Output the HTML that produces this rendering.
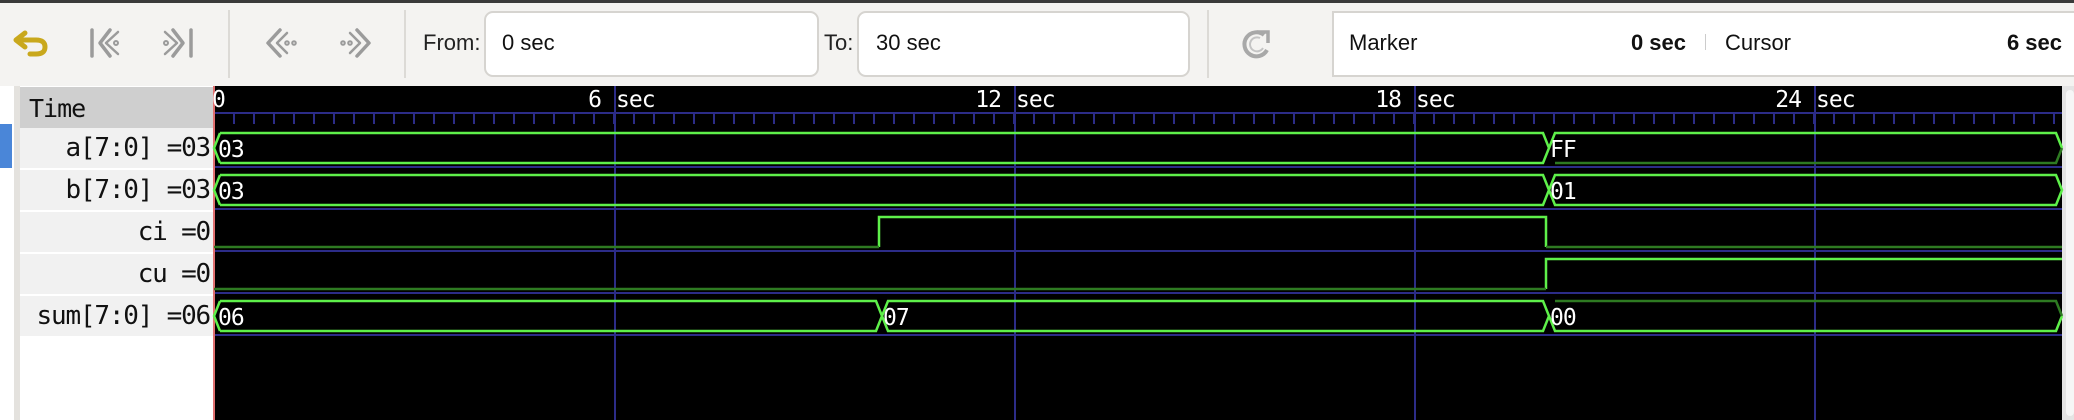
<!DOCTYPE html>
<html><head><meta charset="utf-8">
<style>
*{margin:0;padding:0;box-sizing:border-box}
body{width:2074px;height:420px;overflow:hidden;background:#f4f3f1;font-family:"Liberation Sans",sans-serif;position:relative}
.abs{position:absolute}
.box{position:absolute;background:#fff;border:2px solid #d6d4d0;border-radius:9px}
.lbl{position:absolute;font-size:22px;color:#222;top:30px}
.mono{font-family:"DejaVu Sans Mono","Liberation Mono",monospace}
.row{position:absolute;left:20px;width:193px;height:40px;background:#f1f1f1;text-align:right;padding-right:3px;font-size:26px;line-height:40px;color:#111;letter-spacing:-1.2px}
</style></head><body>
<div class="abs" style="left:0;top:0;width:2074px;height:3px;background:#3a3a3a"></div>
<svg class="abs" style="left:0;top:0" width="420" height="86">
 <path d="M25 33 L16 40 L25 47 M16 40 L36 40 Q45 40 45 47 Q45 54 36 54 L30 54" fill="none" stroke="#c9a81c" stroke-width="5" stroke-linejoin="round" stroke-linecap="round"/>
 <g fill="none" stroke="#9b9b9b" stroke-width="3.5" stroke-linecap="round" stroke-linejoin="round">
  <path d="M92 30 V56"/><path d="M110 30 L100 43 L110 56"/><path d="M118 32 L106 43 L118 54" stroke-width="2.5"/><circle cx="116" cy="43" r="2" stroke-width="2"/>
  <path d="M191 30 V56"/><path d="M173 30 L183 43 L173 56"/><path d="M165 32 L177 43 L165 54" stroke-width="2.5"/><circle cx="166" cy="43" r="2" stroke-width="2"/>
  <path d="M280 30 L268 43 L280 56"/><path d="M287 33 L277 43 L287 53" stroke-width="2.5"/><circle cx="287" cy="43" r="1.8" stroke-width="2"/><circle cx="294" cy="43" r="1.8" stroke-width="2"/>
  <path d="M357 30 L369 43 L357 56"/><path d="M350 33 L360 43 L350 53" stroke-width="2.5"/><circle cx="343" cy="43" r="1.8" stroke-width="2"/><circle cx="350" cy="43" r="1.8" stroke-width="2"/>
 </g>
 <rect x="228" y="10" width="2" height="68" fill="#dcdad6"/>
 <rect x="404" y="10" width="2" height="68" fill="#dcdad6"/>
</svg>
<div class="lbl" style="left:423px">From:</div>
<div class="box" style="left:484px;top:11px;width:335px;height:66px"></div>
<div class="lbl" style="left:502px;color:#111">0 sec</div>
<div class="lbl" style="left:824px">To:</div>
<div class="box" style="left:857px;top:11px;width:333px;height:66px"></div>
<div class="lbl" style="left:876px;color:#111">30 sec</div>
<div class="abs" style="left:1207px;top:10px;width:2px;height:68px;background:#dcdad6"></div>
<svg class="abs" style="left:1240px;top:26px" width="40" height="36"><path d="M24 9 A12 12 0 1 0 27 24" fill="none" stroke="#a8a8a8" stroke-width="4"/><path d="M17 6 L28 6 L28 17" fill="none" stroke="#a8a8a8" stroke-width="3.5"/><path d="M20 12 A7 7 0 1 0 23 22" fill="none" stroke="#c4c4c4" stroke-width="2"/></svg>
<div class="box" style="left:1332px;top:11px;width:760px;height:66px;border-radius:0"></div>
<div class="lbl" style="left:1349px;color:#111">Marker</div>
<div class="lbl" style="left:1580px;width:106px;text-align:right;font-weight:bold;color:#111">0 sec</div>
<div class="abs" style="left:1705px;top:34px;width:1px;height:16px;background:#ccc"></div>
<div class="lbl" style="left:1725px;color:#111">Cursor</div>
<div class="lbl" style="left:1950px;width:112px;text-align:right;font-weight:bold;color:#111">6 sec</div>

<div class="abs" style="left:0;top:86px;width:214px;height:334px;background:#fff"></div>
<div class="abs" style="left:0;top:124px;width:12px;height:44px;background:#4a86d8"></div>
<div class="abs" style="left:14px;top:86px;width:6px;height:334px;background:#e4e2de"></div>
<div class="abs mono" style="left:20px;top:87px;width:193px;height:41px;background:#cfcfcf;font-size:25px;line-height:44px;padding-left:9px;color:#111;letter-spacing:-1px">Time</div>
<div class="row mono" style="top:128px">a[7:0] =03</div>
<div class="row mono" style="top:170px">b[7:0] =03</div>
<div class="row mono" style="top:212px">ci =0</div>
<div class="row mono" style="top:254px">cu =0</div>
<div class="row mono" style="top:296px">sum[7:0] =06</div>

<svg class="abs" style="left:0;top:86px" width="2074" height="334" viewBox="0 86 2074 334" font-family="DejaVu Sans Mono, Liberation Mono, monospace">
 <rect x="214" y="86" width="1848" height="334" fill="#000"/>
 <rect x="2062" y="86" width="12" height="334" fill="#e4e4e4"/>
 <rect x="2066" y="90" width="8" height="326" rx="4" fill="#f6f6f6"/>
 <g id="ticks" stroke="#2c2c88" stroke-width="2"></g>
 <line x1="214" y1="113" x2="2062" y2="113" stroke="#2c2c88" stroke-width="2"/>
 <g stroke="#2c2c88" stroke-width="2">
  <line x1="615" y1="86" x2="615" y2="420"/><line x1="1015" y1="86" x2="1015" y2="420"/><line x1="1415" y1="86" x2="1415" y2="420"/><line x1="1815" y1="86" x2="1815" y2="420"/>
  <line x1="214" y1="167" x2="2062" y2="167"/><line x1="214" y1="209" x2="2062" y2="209"/><line x1="214" y1="251" x2="2062" y2="251"/><line x1="214" y1="293" x2="2062" y2="293"/><line x1="214" y1="335" x2="2062" y2="335"/>
 </g>
 <line x1="214" y1="86" x2="214" y2="420" stroke="#e07070" stroke-width="2"/>
 <g fill="#fff" font-size="23" letter-spacing="-1">
  <text x="212" y="107">0</text>
  <text x="601" y="107" text-anchor="end">6</text><text x="616" y="107">sec</text>
  <text x="1001" y="107" text-anchor="end">12</text><text x="1016" y="107">sec</text>
  <text x="1401" y="107" text-anchor="end">18</text><text x="1416" y="107">sec</text>
  <text x="1801" y="107" text-anchor="end">24</text><text x="1816" y="107">sec</text>
 </g>
 <g fill="none" stroke="#5ef04a" stroke-width="2.5">
  <path d="M220 133 L214 148 L220 163 M220 133 H1543 L1549 148 L1543 163 H220"/>
  <path d="M1549 148 L1555 133 H2056 L2062 148"/>
  <path d="M220 175 L214 190 L220 205 M220 175 H1543 L1549 190 L1543 205 H220"/>
  <path d="M1549 190 L1555 175 H2056 L2062 190 L2056 205 H1555 L1549 190"/>
  <path d="M879 247 V217 H1546 V247"/>
  <path d="M1546 289 V259 H2062"/>
  <path d="M220 301 L214 316 L220 331 M220 301 H876 L882 316 L876 331 H220"/>
  <path d="M882 316 L888 301 H1543 L1549 316 L1543 331 H888 L882 316"/>
  <path d="M1549 316 L1555 331 H2056 L2062 316"/>
 </g>
 <g fill="none" stroke="#2e7a22" stroke-width="2.5">
  <path d="M1555 163 H2056 L2062 148"/>
  <path d="M214 247 H879 M1546 247 H2062"/>
  <path d="M214 289 H1546"/>
  <path d="M1555 301 H2056 L2062 316"/>
 </g>
 <g fill="#fff" font-size="23" letter-spacing="-1">
  <text x="218" y="157">03</text><text x="1550" y="157">FF</text>
  <text x="218" y="199">03</text><text x="1550" y="199">01</text>
  <text x="218" y="325">06</text><text x="883" y="325">07</text><text x="1550" y="325">00</text>
 </g>
</svg>
<script>
var g=document.getElementById('ticks'),s='';
for(var x=234;x<2062;x+=20){s+='<line x1="'+x+'" y1="113" x2="'+x+'" y2="124"/>';}
g.innerHTML=s;
</script>
</body></html>
